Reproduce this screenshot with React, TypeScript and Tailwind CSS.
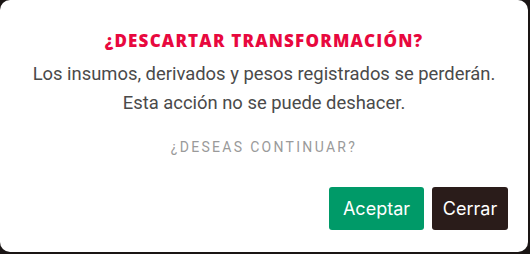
import React from "react";

export default function App() {
  return (
    <div className="w-[530px] h-[254px] bg-[#1a1514] overflow-hidden">
      <div className="w-[528px] h-[252px] bg-white rounded-[10px] flex flex-col items-center pt-[29px] px-4">
        <h2 className="font-['Open_Sans',sans-serif] text-[17px] leading-[24px] font-extrabold text-[#e8083e] uppercase tracking-[1.2px]">
          ¿Descartar transformación?
        </h2>
        <p className="font-['Roboto',sans-serif] mt-[6px] text-[18.4px] leading-[29px] text-[#4a4a4a] text-center">
          Los insumos, derivados y pesos registrados se perderán.
          <br />
          Esta acción no se puede deshacer.
        </p>
        <p className="font-['Roboto',sans-serif] mt-[22px] text-[14px] leading-[16px] tracking-[2.3px] text-[#9a9a9a] uppercase">
          ¿Deseas continuar?
        </p>
        <div className="mt-[32px] self-end flex gap-2 mr-[4px]">
          <button className="font-['Inter',sans-serif] h-[43px] w-[95px] rounded-[3px] bg-[#009a68] text-white text-[18px]">
            Aceptar
          </button>
          <button className="font-['Inter',sans-serif] h-[43px] w-[76px] rounded-[3px] bg-[#2a1c1a] text-white text-[18px]">
            Cerrar
          </button>
        </div>
      </div>
    </div>
  );
}
